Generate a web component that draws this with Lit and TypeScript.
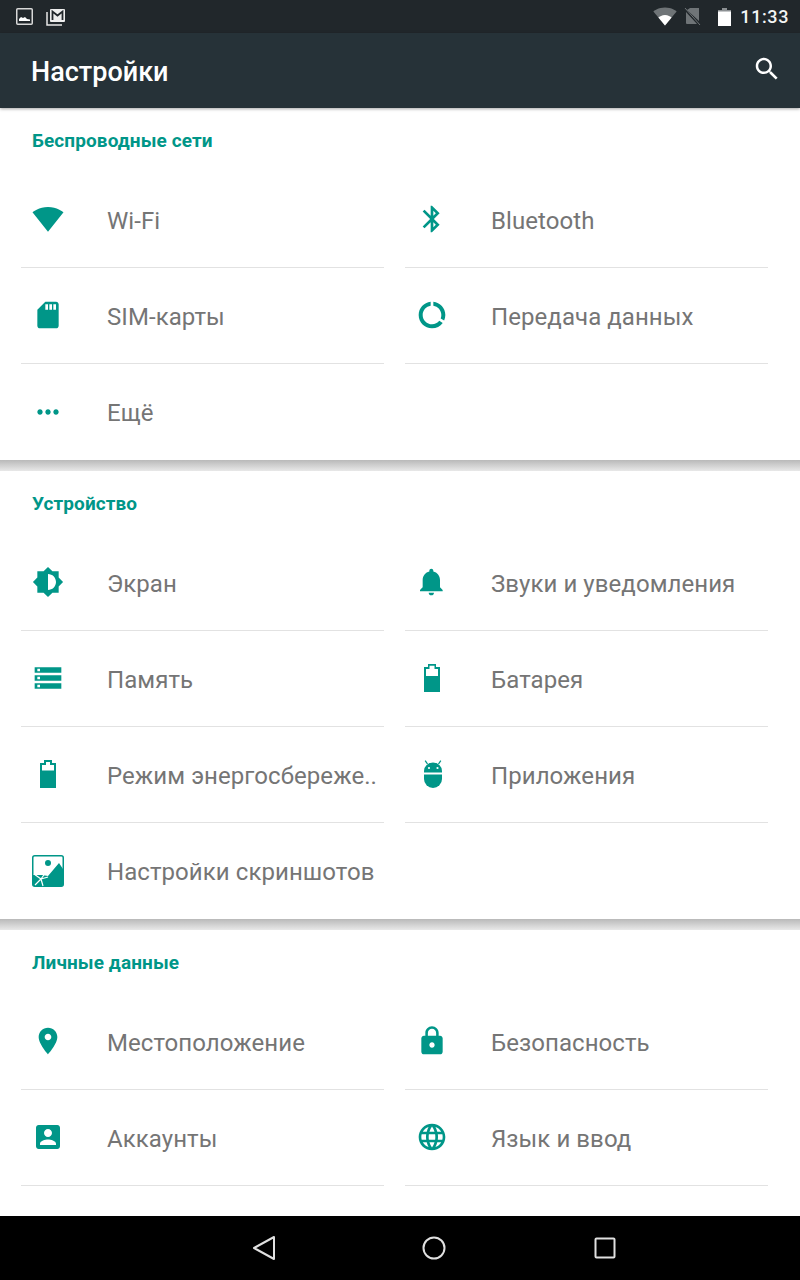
import { LitElement, html, css, svg } from "lit";
import { customElement } from "lit/decorators.js";

const P: Record<string, string> = {
  wifi: "M12.01 21.49L23.64 7c-.45-.34-4.93-4-11.64-4C5.28 3 .81 6.66.36 7l11.63 14.49.01.01.01-.01z",
  bt: "M17.71 7.71L12 2h-1v7.59L6.41 5 5 6.41 10.59 12 5 17.59 6.41 19 11 14.41V22h1l5.71-5.71-4.3-4.29 4.3-4.29zM13 5.83l1.88 1.88L13 9.59V5.83zm1.88 10.46L13 18.17v-3.76l1.88 1.88z",
  sim: "M18 2h-8L4.02 8 4 20c0 1.1.9 2 2 2h12c1.1 0 2-.9 2-2V4c0-1.1-.9-2-2-2zm-6 6h-2V4h2v4zm3 0h-2V4h2v4zm3 0h-2V4h2v4z",
  data: "M13 2.05v3.03c3.39.49 6 3.39 6 6.92 0 .9-.18 1.75-.48 2.54l2.6 1.53c.56-1.24.88-2.62.88-4.07 0-5.18-3.95-9.45-9-9.95zM12 19c-3.87 0-7-3.13-7-7 0-3.53 2.61-6.43 6-6.92V2.05c-5.06.5-9 4.76-9 9.95 0 5.52 4.47 10 9.99 10 3.31 0 6.24-1.61 8.06-4.09l-2.6-1.53C16.17 17.98 14.21 19 12 19z",
  more: "M6 10c-1.1 0-2 .9-2 2s.9 2 2 2 2-.9 2-2-.9-2-2-2zm12 0c-1.1 0-2 .9-2 2s.9 2 2 2 2-.9 2-2-.9-2-2-2zm-6 0c-1.1 0-2 .9-2 2s.9 2 2 2 2-.9 2-2-.9-2-2-2z",
  bright: "M20 15.31L23.31 12 20 8.69V4h-4.69L12 .69 8.69 4H4v4.69L.69 12 4 15.31V20h4.69L12 23.31 15.31 20H20v-4.69zM12 18V6c3.31 0 6 2.69 6 6s-2.69 6-6 6z",
  bell: "M11.5 22c1.1 0 2-.9 2-2h-4c0 1.1.9 2 2 2zm6.5-6v-5.5c0-3.07-2.13-5.64-5-6.32V3.5c0-.83-.67-1.5-1.5-1.5S10 2.67 10 3.5v.68c-2.87.68-5 3.25-5 6.32V16l-2 2v1h17v-1l-2-2z",
  storage: "M2 20h20v-4H2v4zm2-3h2v2H4v-2zM2 4v4h20V4H2zm4 3H4V5h2v2zm-4 7h20v-4H2v4zm2-3h2v2H4v-2z",
  pin: "M12 2C8.13 2 5 5.13 5 9c0 5.25 7 13 7 13s7-7.75 7-13c0-3.87-3.13-7-7-7zm0 9.5c-1.38 0-2.5-1.12-2.5-2.5s1.12-2.5 2.5-2.5 2.5 1.12 2.5 2.5-1.12 2.5-2.5 2.5z",
  lock: "M18 8h-1V6c0-2.76-2.24-5-5-5S7 3.24 7 6v2H6c-1.1 0-2 .9-2 2v10c0 1.1.9 2 2 2h12c1.1 0 2-.9 2-2V10c0-1.1-.9-2-2-2zm-6 9c-1.1 0-2-.9-2-2s.9-2 2-2 2 .9 2 2-.9 2-2 2zm3.1-9H8.9V6c0-1.71 1.39-3.1 3.1-3.1 1.71 0 3.1 1.39 3.1 3.1v2z",
  account: "M3 5v14c0 1.1.89 2 2 2h14c1.1 0 2-.9 2-2V5c0-1.1-.9-2-2-2H5c-1.11 0-2 .9-2 2zm12 4c0 1.66-1.34 3-3 3s-3-1.34-3-3 1.34-3 3-3 3 1.34 3 3zm-9 8c0-2 4-3.1 6-3.1s6 1.1 6 3.1v1H6v-1z",
  globe: "M11.99 2C6.47 2 2 6.48 2 12s4.47 10 9.99 10C17.52 22 22 17.52 22 12S17.52 2 11.99 2zm6.93 6h-2.95c-.32-1.25-.78-2.45-1.38-3.56 1.84.63 3.37 1.91 4.33 3.56zM12 4.04c.83 1.2 1.48 2.53 1.91 3.96h-3.82c.43-1.43 1.08-2.76 1.91-3.96zM4.26 14C4.1 13.36 4 12.69 4 12s.1-1.36.26-2h3.38c-.08.66-.14 1.32-.14 2 0 .68.06 1.34.14 2H4.26zm.82 2h2.95c.32 1.25.78 2.45 1.38 3.56-1.84-.63-3.37-1.9-4.33-3.56zm2.95-8H5.08c.96-1.66 2.49-2.93 4.33-3.56C8.81 5.55 8.35 6.75 8.03 8zM12 19.96c-.83-1.2-1.48-2.53-1.91-3.96h3.82c-.43 1.43-1.08 2.76-1.91 3.96zM14.34 14H9.66c-.09-.66-.16-1.32-.16-2 0-.68.07-1.35.16-2h4.68c.09.65.16 1.32.16 2 0 .68-.07 1.34-.16 2zm.25 5.56c.6-1.11 1.06-2.31 1.38-3.56h2.95c-.96 1.65-2.49 2.93-4.33 3.56zM16.36 14c.08-.66.14-1.32.14-2 0-.68-.06-1.34-.14-2h3.38c.16.64.26 1.31.26 2s-.1 1.36-.26 2h-3.38z",
  search: "M15.5 14h-.79l-.28-.27C15.41 12.59 16 11.11 16 9.5 16 5.91 13.09 3 9.5 3S3 5.91 3 9.5 5.91 16 9.5 16c1.61 0 3.09-.59 4.23-1.57l.27.28v.79l5 4.99L20.49 19l-4.99-5zm-6 0C7.01 14 5 11.99 5 9.5S7.01 5 9.5 5 14 7.01 14 9.5 11.99 14 9.5 14z",
};

const mat = (k: string) => svg`<svg class="ic" viewBox="0 0 24 24" fill="#009688"><path d=${P[k]}></path></svg>`;

const battery = svg`<svg class="ic" viewBox="0 0 32 32" fill="#009688"><path d="M8 5h4V2h8v3h4v25H8z"></path><path fill="#fff" d="M10 7h3.500V3.800h5V7H22v7H10z"></path></svg>`;
const batteryLeft = svg`<svg class="ic" viewBox="0 0 32 32" fill="#009688"><path d="M8 5h4V2h8v3h4v25H8z"></path><path fill="#fff" d="M10 7h4V4h4v3h4v5.500H10z"></path></svg>`;
const android = svg`<svg class="ic" viewBox="0 0 32 32" fill="#009688"><path d="M8 14.500v-1.500a9 8.500 0 0 1 18 0v1.500z"></path><path d="M8 16.500h18v4.500a9 9 0 0 1-18 0z"></path><circle cx="13" cy="10" r="1.100" fill="#fff"></circle><circle cx="21.500" cy="10" r="1.100" fill="#fff"></circle><path d="M11.500 6L9.200 2.700M22.500 6l2.300-3.300" stroke="#009688" stroke-width="1.300"></path></svg>`;
const shots = svg`<svg class="ic" viewBox="0 0 32 32"><rect x=".75" y=".75" width="30.500" height="30.500" rx="2" fill="#fff" stroke="#009688" stroke-width="1.500"></rect><circle cx="16" cy="8" r="3" fill="#009688"></circle><path fill="#009688" d="M1 20l9 0 6 1L27 8l4 6v16a1 1 0 0 1-1 1H2a1 1 0 0 1-1-1z"></path><path d="M9 24l5-7M9 24L2 19M9 24L3 30M9 24l2 7M9 24l7-2" stroke="#fff" stroke-width="1.200" fill="none"></path></svg>`;

type Item = { label: string; icon: unknown };
const sections: { title: string; items: (Item | null)[] }[] = [
  {
    title: "Беспроводные сети",
    items: [
      { label: "Wi-Fi", icon: mat("wifi") },
      { label: "Bluetooth", icon: mat("bt") },
      { label: "SIM-карты", icon: mat("sim") },
      { label: "Передача данных", icon: mat("data") },
      { label: "Ещё", icon: mat("more") },
    ],
  },
  {
    title: "Устройство",
    items: [
      { label: "Экран", icon: mat("bright") },
      { label: "Звуки и уведомления", icon: mat("bell") },
      { label: "Память", icon: mat("storage") },
      { label: "Батарея", icon: battery },
      { label: "Режим энергосбереже..", icon: batteryLeft },
      { label: "Приложения", icon: android },
      { label: "Настройки скриншотов", icon: shots },
    ],
  },
  {
    title: "Личные данные",
    items: [
      { label: "Местоположение", icon: mat("pin") },
      { label: "Безопасность", icon: mat("lock") },
      { label: "Аккаунты", icon: mat("account") },
      { label: "Язык и ввод", icon: mat("globe") },
      null,
    ],
  },
];

@customElement("app-root")
export class AppRoot extends LitElement {
  static styles = css`
    :host { display: block; width: 800px; height: 1280px; font-family: Roboto, "Noto Sans", sans-serif; background: #fff; }
    .page { display: flex; flex-direction: column; height: 1280px; overflow: hidden; }
    .status { height: 33px; flex: none; background: #21272b; display: flex; align-items: center; padding: 0 11px 0 16px; box-sizing: border-box; color: #fff; }
    .status svg { display: block; flex: none; }
    .spacer { flex: 1; }
    .time { font-size: 18px; font-weight: 500; margin-left: 9px; letter-spacing: .6px; color: #f4f5f5; }
    .bar { height: 75px; flex: none; background: #263238; display: flex; align-items: center; justify-content: space-between; padding: 0 18px 3px 31px; box-sizing: border-box; position: relative; z-index: 1; box-shadow: 0 1px 3px rgba(0,0,0,.35); }
    .bar h1 { margin: 6px 0 0; font-size: 27px; font-weight: 500; color: #fff; }
    .bar svg { width: 30px; height: 30px; display: block; fill: #fff; }
    .content { flex: 1; min-height: 0; overflow: hidden; }
    .divider { height: 11px; background: linear-gradient(#b9b9b9, #e8e8e8); }
    .head { height: 64px; box-sizing: border-box; padding: 20px 0 0 32px; font-size: 19px; line-height: 25px; font-weight: 700; letter-spacing: .1px; color: #009688; }
    .grid { display: grid; grid-template-columns: 363px 363px; column-gap: 21px; padding-left: 21px; }
    .row { height: 96px; box-sizing: border-box; border-bottom: 1px solid #e2e2e2; display: flex; align-items: center; padding-left: 11px; font-size: 24px; letter-spacing: .07px; color: #757575; white-space: nowrap; }
    .row span { margin-top: 2px; }
    .row.last { border-bottom: 0; }
    .row.right { padding-left: 10.5px; }
    .ic { width: 32px; height: 32px; flex: none; margin: -1px 43px 0 0; display: block; }
    .row.right .ic { margin-right: 43.5px; }
    .nav { height: 64px; flex: none; background: #000; display: flex; align-items: center; padding: 0 0 0 252px; box-sizing: border-box; }
    .nav svg { display: block; flex: none; fill: none; stroke: #e0e0e0; stroke-width: 2; }
    .nav .home { margin-left: 146px; }
    .nav .recent { margin-left: 147.5px; }
  `;

  render() {
    return html`<div class="page">
      <div class="status">
        <svg width="17" height="17" viewBox="0 0 17 17"><rect x=".75" y=".75" width="15.500" height="15.500" rx="1" fill="none" stroke="#d8d8d8" stroke-width="1.500"></rect><path d="M3 13v-2l2-2 2 1 2-1 2 2 3 .5V13z" fill="#fff"></path></svg>
        <svg style="margin-left:13px" width="20" height="18" viewBox="0 0 20 18"><path d="M1 4v13h15" fill="none" stroke="#e8e8e8" stroke-width="1.500"></path><rect x="4" y="1" width="15" height="13" rx="1" fill="#eee"></rect><path d="M6.500 12V3.500l5 4 5-4V12" fill="none" stroke="#21272b" stroke-width="1.800"></path></svg>
        <div class="spacer"></div>
        <svg width="24" height="19" viewBox="0 0 24 19"><path d="M12 18.500L.4 4.500C1 4 5.300.6 12 .6S23 4 23.600 4.500z" fill="#6f7477"></path><path d="M12 18.500L5.400 10.500C6.500 9.500 9 8 12 8s5.500 1.500 6.600 2.500z" fill="#fff"></path></svg>
        <svg style="margin-left:7px" width="17" height="19" viewBox="0 0 17 19"><path d="M6 1h9v13L3 3zM2 5l11 12H3a1 1 0 0 1-1-1z" fill="#6f7477"></path><path d="M1 1l15 17" stroke="#6f7477" stroke-width="1"></path></svg>
        <svg style="margin-left:17px" width="13" height="20" viewBox="0 0 13 20"><path d="M0 3h4V1h5v2h4v16H0z" fill="#fff"></path><path d="M0 3h4V1h5v2h4v1.500H0z" fill="#8c9093"></path></svg>
        <span class="time">11:33</span>
      </div>
      <div class="bar">
        <h1>Настройки</h1>
        <svg viewBox="0 0 24 24"><path d=${P.search}></path></svg>
      </div>
      <div class="content">
        ${sections.map(
          (s, i) => html`
            ${i > 0 ? html`<div class="divider"></div>` : ""}
            <div class="head">${s.title}</div>
            <div class="grid">
              ${s.items.map((it, j) =>
                it
                  ? html`<div class="row ${j % 2 ? "right" : ""} ${i < 2 && j === s.items.length - 1 ? "last" : ""}">${it.icon}<span>${it.label}</span></div>`
                  : html`<div class="row last"></div>`
              )}
            </div>
          `
        )}
      </div>
      <div class="nav">
        <svg width="24" height="26" viewBox="0 0 24 26" stroke-linejoin="round"><path d="M22 2v22L2 13z"></path></svg>
        <svg class="home" width="24" height="24" viewBox="0 0 24 24"><circle cx="12" cy="12" r="10.500"></circle></svg>
        <svg class="recent" width="22" height="22" viewBox="0 0 22 22"><rect x="1.500" y="1.500" width="19" height="19" rx="1"></rect></svg>
      </div>
    </div>`;
  }
}
